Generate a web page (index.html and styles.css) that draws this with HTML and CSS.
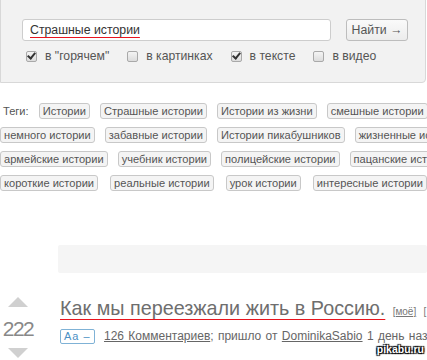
FILE: index.html
```html
<!DOCTYPE html>
<html lang="ru">
<head>
    <meta charset="UTF-8">
    <meta name="viewport" content="width=device-width, initial-scale=1.0">
    <title>Поиск</title>
    <link rel="stylesheet" href="styles.css">
</head>
<body>
    <div class="search-panel">
        <div class="search-row">
            <div class="search-input"><span class="typo">Страшные истории</span></div>
            <button class="search-button">Найти &rarr;</button>
        </div>
        <div class="filters">
            <label class="filter"><span class="box checked"></span>в "горячем"</label>
            <label class="filter"><span class="box"></span>в картинках</label>
            <label class="filter"><span class="box checked"></span>в тексте</label>
            <label class="filter"><span class="box"></span>в видео</label>
        </div>
    </div>

    <div class="tags">
        <div class="tag-row">
            <span class="tags-label">Теги:</span>
            <a class="tag">Истории</a>
            <a class="tag">Страшные истории</a>
            <a class="tag">Истории из жизни</a>
            <a class="tag">смешные истории</a>
        </div>
        <div class="tag-row">
            <a class="tag">немного истории</a>
            <a class="tag">забавные истории</a>
            <a class="tag">Истории пикабушников</a>
            <a class="tag">жизненные истории</a>
        </div>
        <div class="tag-row">
            <a class="tag">армейские истории</a>
            <a class="tag">учебник истории</a>
            <a class="tag">полицейские истории</a>
            <a class="tag">пацанские истории</a>
        </div>
        <div class="tag-row wide">
            <a class="tag">короткие истории</a>
            <a class="tag">реальные истории</a>
            <a class="tag">урок истории</a>
            <a class="tag">интересные истории</a>
        </div>
    </div>

    <div class="banner"></div>

    <div class="post">
        <div class="rating">
            <span class="arrow up"></span>
            <span class="score">222</span>
            <span class="arrow down"></span>
        </div>
        <div class="post-body">
            <div class="post-title">
                <a class="title-link">Как мы переезжали жить в Россию.</a>
                <a class="post-mark">[моё]</a>
                <a class="post-mark">[</a>
            </div>
            <div class="post-info">
                <span class="font-size">Aa &ndash;</span>
                <a class="info-link">126 Комментариев</a>; пришло от <a class="info-link">DominikaSabio</a> 1 день назад
            </div>
        </div>
    </div>

    <div class="watermark">pikabu.ru</div>
</body>
</html>
```

FILE: styles.css
```css
body{
    margin: 0;
    width: 427px;
    height: 360px;
    overflow: hidden;
    position: relative;
    background-color: white;
    color: #555;
    font-family: "Liberation Sans", Arial, sans-serif;
    font-size: 12px;
}

.search-panel{
    width: 424px;
    height: 63px;
    margin-top: -2px;
    background-color: #f2f2f2;
    border: 1px solid #d8d8d8;
    border-radius: 0 0 4px 0;
    padding-top: 20px;
}
.search-row{
    display: flex;
    align-items: center;
    padding-left: 21px;
}
.search-input{
    width: 300px;
    height: 20px;
    background-color: white;
    border: 1px solid #cdcdcd;
    border-radius: 3px;
    padding-left: 7px;
    font-size: 12.3px;
    line-height: 20px;
    color: #333;
}
.typo{
    text-decoration: underline;
    text-decoration-color: #e8141e;
    text-underline-offset: 3px;
}
.search-button{
    margin-left: 15px;
    width: 62px;
    height: 22px;
    padding: 0;
    background: linear-gradient(#fafafa, #ececec);
    border: 1px solid #bdbdbd;
    border-radius: 3px;
    color: #555;
    font-family: inherit;
    font-size: 12.3px;
}
.filters{
    display: flex;
    align-items: center;
    white-space: nowrap;
    padding-left: 25px;
    margin-top: 8px;
    font-size: 12.2px;
}
.filter{
    display: flex;
    align-items: center;
    margin-right: 18px;
}
.box{
    width: 9px;
    height: 9px;
    margin-right: 8px;
    border: 1px solid #a9a9a9;
    border-radius: 2px;
    background: linear-gradient(#f4f4f4, #dcdcdc);
    position: relative;
}
.box.checked::after{
    content: "";
    position: absolute;
    left: 2px;
    top: -1px;
    width: 3px;
    height: 6px;
    border: solid #333;
    border-width: 0 2px 2px 0;
    transform: rotate(40deg);
}

.tags{
    margin-top: 20px;
    font-size: 11.1px;
}
.tag-row{
    display: flex;
    white-space: nowrap;
    gap: 10px;
    height: 16px;
    margin-bottom: 8px;
    align-items: center;
}
.tag-row.wide{
    gap: 12px;
}
.tags-label{
    margin-left: 3px;
}
.tag{
    display: inline-block;
    height: 14px;
    line-height: 14px;
    padding: 0 3px;
    border: 1px solid #c8c8c8;
    border-radius: 3px;
    background-color: #f4f4f4;
    color: #555;
    flex-shrink: 0;
}

.banner{
    margin: 54px 0 0 58px;
    height: 28px;
    background-color: #f5f5f5;
    border-radius: 2px;
}

.post{
    display: flex;
    margin-top: 22px;
}
.rating{
    width: 36px;
    flex-shrink: 0;
    display: flex;
    flex-direction: column;
    align-items: center;
}
.arrow{
    width: 0;
    height: 0;
    border-left: 10px solid transparent;
    border-right: 10px solid transparent;
}
.arrow.up{
    margin-top: 2px;
    border-bottom: 10px solid #d0d0d0;
}
.arrow.down{
    border-top: 10px solid #d0d0d0;
}
.score{
    font-size: 21px;
    letter-spacing: -1.5px;
    color: #888;
    line-height: 22px;
    margin: 11px 0 8px;
}
.post-body{
    margin-left: 24px;
    white-space: nowrap;
}
.post-title{
    line-height: 26px;
}
.title-link{
    font-size: 19.8px;
    color: #6e6e6e;
    text-decoration: underline;
    text-decoration-color: #e8141e;
    text-underline-offset: 4px;
}
.post-mark{
    font-size: 10px;
    color: #777;
    text-decoration: underline;
    margin-left: 4px;
}
.post-info{
    margin-top: 4px;
    font-size: 12px;
    word-spacing: 1px;
    color: #666;
}
.font-size{
    display: inline-block;
    padding: 0 3px;
    font-size: 11px;
    line-height: 13px;
    word-spacing: 0;
    border: 1px solid #7fb2d6;
    border-radius: 2px;
    color: #4b8fc4;
    letter-spacing: 1px;
    margin-right: 5px;
}
.info-link{
    color: #666;
    text-decoration: underline;
}

.watermark{
    position: absolute;
    right: 3px;
    bottom: 5px;
    font-size: 10.5px;
    font-weight: bold;
    color: white;
    text-shadow: 1px 1px 1px #000, -1px -1px 1px #000, 1px -1px 1px #000, -1px 1px 1px #000;
}
```
